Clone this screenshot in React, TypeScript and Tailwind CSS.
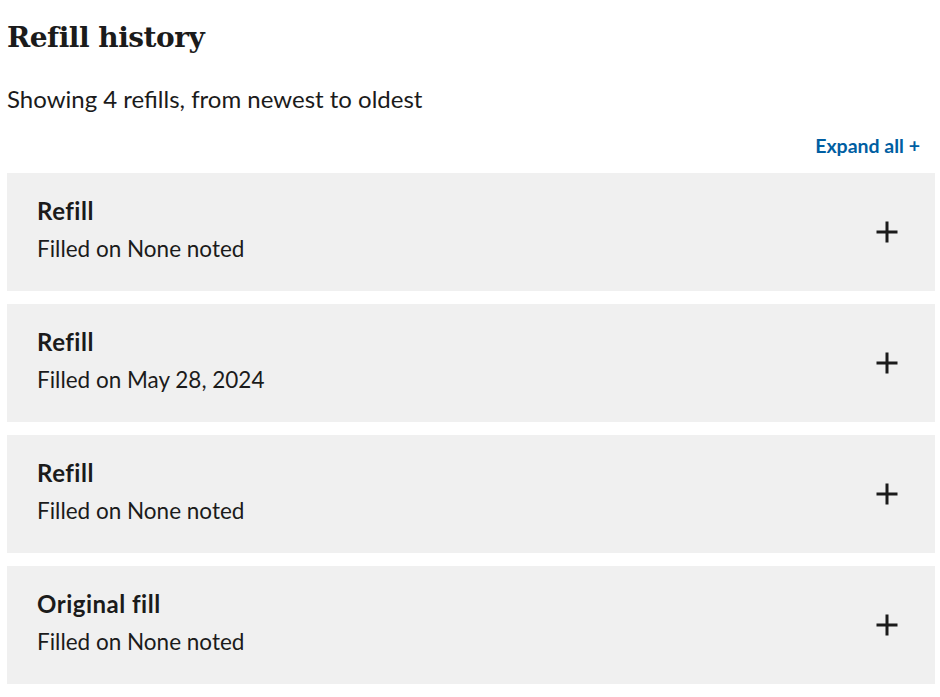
import React from 'react'

interface Fill {
    title: string;
    date: string;
}

const fills: Fill[] = [
    { title: "Refill", date: "None noted" },
    { title: "Refill", date: "May 28, 2024" },
    { title: "Refill", date: "None noted" },
    { title: "Original fill", date: "None noted" },
];

const PlusIcon = () => (
    <svg width="24" height="24" viewBox="0 0 24 24" className="text-[#1b1b1b]">
        <path d="M12 1.5v21M1.5 12h21" stroke="currentColor" strokeWidth="3" />
    </svg>
);

const App: React.FC = () => {
    return (
        <div className="bg-white min-h-screen px-[7px] pt-[18px] text-[#1b1b1b] font-['Lato',sans-serif]">
            <h1 className="font-['DejaVu_Serif',serif] font-bold text-[28px] leading-[40px] tracking-[-0.5px]">
                Refill history
            </h1>
            <p className="mt-[26px] text-[24px] leading-[30px]">
                Showing 4 refills, from newest to oldest
            </p>

            <div className="flex justify-end mt-[20px] pr-[13px]">
                <button className="text-[#005ea2] font-bold text-[19.5px] leading-[24px]">
                    Expand all +
                </button>
            </div>

            {/* Accordion list */}
            <div className="flex flex-col gap-[13px] mt-[15px] w-[928px]">
                {fills.map((f, i) => (
                    <div key={i} className="bg-[#f0f0f0] h-[118px] flex items-center justify-between pl-[30px] pr-[36px]">
                        <div>
                            <p className="font-bold text-[24px] leading-[32px] tracking-[0.5px]">{f.title}</p>
                            <p className="mt-[2px] text-[22.5px] leading-[40px]">Filled on {f.date}</p>
                        </div>
                        <PlusIcon />
                    </div>
                ))}
            </div>
        </div>
    )
}

export default App
